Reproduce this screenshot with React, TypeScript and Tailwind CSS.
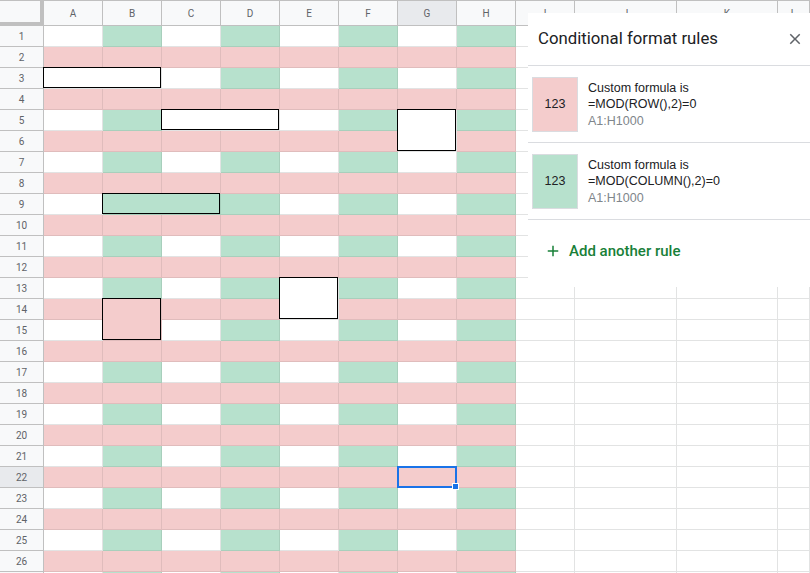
import React from "react";

const COLS = ["A", "B", "C", "D", "E", "F", "G", "H"];
const EXTRA = ["I", "J", "K", "L"];
const ROWS = Array.from({ length: 27 }, (_, i) => i + 1);

// merged cells that carry a black outline: key is "row-col"
const MERGES: Record<string, "wide" | "tall"> = {
  "3-1": "wide",
  "5-3": "wide",
  "5-7": "tall",
  "9-2": "wide",
  "13-5": "tall",
  "14-2": "tall",
};

const covered = new Set<string>();
Object.entries(MERGES).forEach(([key, kind]) => {
  const [r, c] = key.split("-").map(Number);
  covered.add(kind === "wide" ? `${r}-${c + 1}` : `${r + 1}-${c}`);
});

function fill(r: number, c: number) {
  if (r % 2 === 0) return "bg-[#f4cccc] border-black/[0.08]";
  if (c % 2 === 0) return "bg-[#b7e1cd] border-black/[0.08]";
  return "bg-white border-[#e2e3e3]";
}

function Cell({ r, c }: { r: number; c: number }) {
  const kind = MERGES[`${r}-${c}`];
  const selected = r === 22 && c === 7;
  const span = kind === "wide" ? "col-span-2" : kind === "tall" ? "row-span-2" : "";
  return (
    <div
      className={`border-r border-b ${fill(r, c)} ${span} ${
        kind ? "relative z-[1]" : ""
      } ${selected ? "relative z-[2]" : ""}`}
    >
      {kind && <div className="absolute -left-px -top-px right-0 bottom-0 border border-black" />}
      {selected && (
        <div className="absolute -left-px -top-px -right-px -bottom-px border-2 border-[#1a73e8]">
          <div className="absolute -right-[4px] -bottom-[4px] w-[7px] h-[7px] bg-[#1a73e8] border border-white" />
        </div>
      )}
    </div>
  );
}

function RuleCard({ swatch, formula }: { swatch: string; formula: string }) {
  return (
    <div className="flex items-center h-[77px] pl-[4px] border-b border-[#dadce0] font-['Liberation_Sans',_Arial,_sans-serif]">
      <div
        className={`w-[46px] h-[55px] ${swatch} border border-[#dadce0] flex items-center justify-center text-[12.5px] text-[#202124]`}
      >
        123
      </div>
      <div className="ml-[10px] text-[12.5px] leading-[16px] text-[#202124]">
        <div>Custom formula is</div>
        <div>{formula}</div>
        <div className="mt-[1px] text-[#80868b]">A1:H1000</div>
      </div>
    </div>
  );
}

export default function App() {
  return (
    <div className="relative w-[810px] h-[573px] overflow-hidden bg-white font-['Roboto',_'Liberation_Sans',_sans-serif]">
      {/* Sheet grid */}
      <div className="grid grid-cols-[44px_repeat(8,59px)_59px_102px_101px_1fr] grid-rows-[26px] auto-rows-[21px]">
        <div className="bg-[#f8f9fa] border-t border-r-4 border-b-4 border-[#c0c0c0]" />
        {COLS.concat(EXTRA).map((col) => (
          <div
            key={col}
            className={`flex items-center justify-center border-t border-r border-b border-[#c0c0c0] text-[10px] text-[#5f6368] ${
              col === "G" ? "bg-[#e8eaed]" : "bg-[#f8f9fa]"
            }`}
          >
            {col}
          </div>
        ))}

        {ROWS.map((r) => (
          <React.Fragment key={r}>
            <div
              className={`flex items-center justify-center border-r border-b border-[#c0c0c0] text-[10px] text-[#5f6368] ${
                r === 22 ? "bg-[#e8eaed]" : "bg-[#f8f9fa]"
              }`}
            >
              {r <= 26 ? r : null}
            </div>
            {COLS.map((_, i) =>
              covered.has(`${r}-${i + 1}`) ? null : <Cell key={i} r={r} c={i + 1} />
            )}
            {EXTRA.map((col) => (
              <div key={col} className="bg-white border-r border-b border-[#e2e3e3]" />
            ))}
          </React.Fragment>
        ))}
      </div>

      {/* Conditional format side panel */}
      <div className="absolute left-[528px] top-[13px] w-[282px] h-[274px] bg-white z-10">
        <div className="flex items-center justify-between h-[53px] pl-[10px] pr-[6px] border-b border-[#dadce0]">
          <span className="text-[16.75px] text-[#202124]">Conditional format rules</span>
          <svg width="18" height="18" viewBox="0 0 24 24" fill="#5f6368">
            <path d="M19 6.41L17.59 5 12 10.59 6.41 5 5 6.41 10.59 12 5 17.59 6.41 19 12 13.41 17.59 19 19 17.59 13.41 12z" />
          </svg>
        </div>
        <RuleCard swatch="bg-[#f4cccc]" formula="=MOD(ROW(),2)=0" />
        <RuleCard swatch="bg-[#b7e1cd]" formula="=MOD(COLUMN(),2)=0" />
        <div className="flex items-center h-[62px] pl-[16px]">
          <svg width="18" height="18" viewBox="0 0 24 24" fill="#188038">
            <path d="M19 13h-6v6h-2v-6H5v-2h6V5h2v6h6v2z" />
          </svg>
          <span className="ml-[7px] text-[15px] font-medium text-[#188038]">Add another rule</span>
        </div>
      </div>
    </div>
  );
}
